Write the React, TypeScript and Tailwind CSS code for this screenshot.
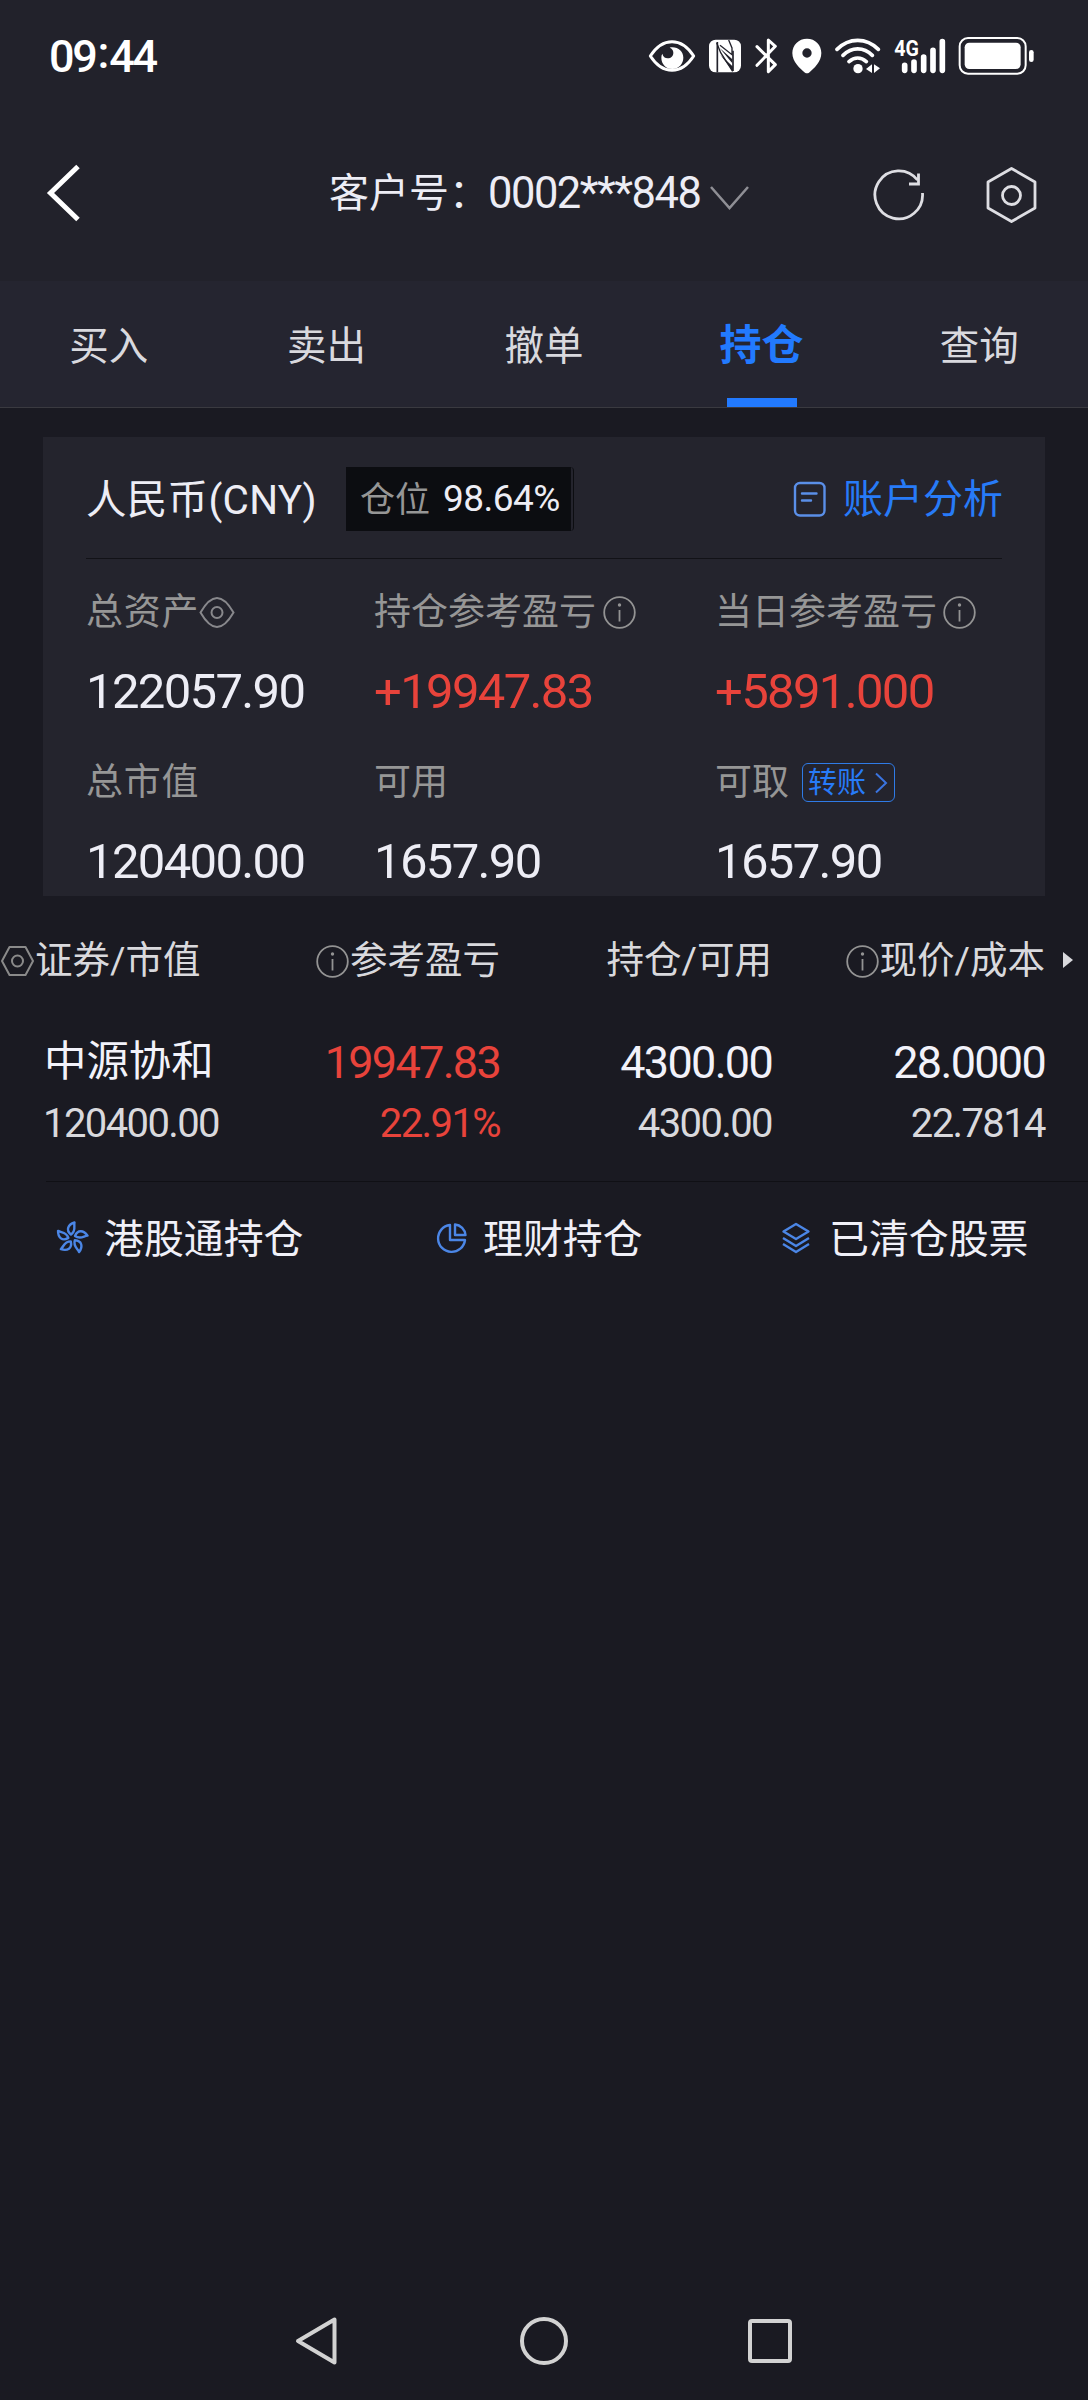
import { ReactNode } from "react";

const tabs = ["买入", "卖出", "撤单", "持仓", "查询"];

function StatusBar() {
  return (
    <div className="flex h-[112px] items-center pl-[49px] pr-[53px] text-white">
      <div className="flex items-center text-[45px] leading-none font-medium tracking-[-2.3px]">
        <span>09</span>
        <span className="px-[2px] pb-[8px]">:</span>
        <span>44</span>
      </div>
      <svg className="ml-auto h-[40px] w-[48px]" viewBox="55 48 144 120" fill="none">
        <path d="M62 108C80 80 100 65 127 65s47 15 65 43c-18 28-38 43-65 43s-47-15-65-43z" stroke="#fff" strokeWidth="9" strokeLinejoin="round" />
        <path d="M128 82c19 0 33 13 33 31s-14 34-33 34-33-15-33-34c0-5 1-9 3-12 2 9 8 14 16 14 10 0 17-7 17-17 0-7-4-13-11-15 2-1 5-1 8-1z" fill="#fff" />
      </svg>
      <svg className="ml-[13px] h-[40px] w-[32px]" viewBox="240 48 96 120" fill="none">
        <rect x="240" y="59" width="96" height="98" rx="20" fill="#fff" />
        <path d="M265 157V66M312 153V92" stroke="#22222b" strokeWidth="5" />
        <path d="M263 68l12 30 36 56M299 60l10 24v20L273 76" stroke="#22222b" strokeWidth="4" />
        <path d="M272 84l38 34v12zM274 104l38 36v14z" fill="#22222b" />
      </svg>
      <svg className="ml-[14px] h-[40px] w-[23px]" viewBox="376 48 69 120" fill="none" stroke="#fff" strokeWidth="9" strokeLinecap="round" strokeLinejoin="round">
        <path d="M382 80l55 54-21 21V60l21 19-55 57" />
      </svg>
      <svg className="ml-[14px] h-[40px] w-[30px]" viewBox="485 48 90 120">
        <path fill="#fff" fillRule="evenodd" d="M530 56c-25 0-44 19-44 43 0 27 23 46 38 59q6 4 12 0c15-13 37-32 37-59 0-24-18-43-43-43zm0 29a14 14 0 1 1 0 28 14 14 0 0 1 0-28z" />
      </svg>
      <svg className="ml-[13px] h-[40px] w-[46px]" viewBox="614 48 138 120" fill="none" stroke="#fff" strokeWidth="11" strokeLinecap="round">
        <path d="M620 88c36-36 88-36 124 0M638 106c26-26 62-26 88 0M656 125c16-14 36-14 52 0" />
        <circle cx="683" cy="146" r="14" fill="#fff" stroke="none" />
        <path d="M725 133v26l-18-12zM731 133v26l18-14z" fill="#fff" stroke="none" />
      </svg>
      <svg className="ml-[13px] h-[40px] w-[52px]" viewBox="791 48 156 120">
        <text x="792" y="107" fill="#fff" fontSize="68" fontWeight="700" textLength="74" lengthAdjust="spacingAndGlyphs">4G</text>
        <path d="M823 136v15M851 126v25M880 111v40M908 91v60M936 65v86" stroke="#fff" strokeWidth="17" strokeLinecap="round" />
      </svg>
      <svg className="ml-[12px] h-[40px] w-[77px]" viewBox="985 48 231 120" fill="none">
        <rect x="990" y="54" width="198" height="107" rx="25" stroke="#fff" strokeWidth="6" />
        <rect x="1005" y="68" width="168" height="79" rx="14" fill="#fff" />
        <rect x="1198" y="90" width="14" height="36" rx="7" fill="#fff" />
      </svg>
    </div>
  );
}

function Header() {
  return (
    <div className="flex h-[169px] items-center pb-[7px]">
      <svg className="ml-[46px] h-[60px] w-[36px] shrink-0" viewBox="46 163 36 60" fill="none">
        <path d="M78 166.500L50.500 193L78 219.500" stroke="#fff" strokeWidth="5" />
      </svg>
      <div className="ml-[247px] flex w-[380px] shrink-0 items-center pt-[2px] text-[40px] leading-none whitespace-nowrap text-[#ededf5]">
        <span className="w-[159px] shrink-0">客户号：</span>
        <span className="w-[221px] shrink-0 text-[43.500px] tracking-[-1.500px]">0002***848</span>
      </div>
      <svg className="mt-[10px] h-[28px] w-[42px] shrink-0" viewBox="709 184 42 28" fill="none">
        <path d="M711 187l18.500 21L748 187" stroke="#8f8f95" strokeWidth="2.500" />
      </svg>
      <svg className="mt-[3px] mr-[57px] ml-auto h-[56px] w-[56px] shrink-0" viewBox="871 167 56 56" fill="none" stroke="#dedee3" strokeWidth="2.800">
        <path d="M922.500 193a23.800 24 0 1 1-5-13M918.500 173.500V184H909" />
      </svg>
      <svg className="mt-[3px] mr-[50px] h-[60px] w-[54px] shrink-0" viewBox="983 165 54 60" fill="none" stroke="#dedee3" strokeWidth="2.800" strokeLinejoin="round">
        <path d="M1010.500 168.500l23.500 13.500v26l-23.500 13.500L987 208v-26z" />
        <circle cx="1010.500" cy="195.500" r="9" />
      </svg>
    </div>
  );
}

function InfoIcon() {
  return (
    <svg className="h-[33px] w-[33px] shrink-0" viewBox="0 0 33 33" fill="none" stroke="#939393" strokeWidth="1.800">
      <circle cx="16.500" cy="16.500" r="15.300" />
      <path d="M16.500 14v11.500" />
      <circle cx="16.500" cy="9" r="1.700" fill="#939393" stroke="none" />
    </svg>
  );
}

function Label({ children }: { children: ReactNode }) {
  return <div className="flex items-center text-[37px] leading-none text-[#969696]">{children}</div>;
}

function Value({ children, red }: { children: ReactNode; red?: boolean }) {
  return (
    <div className={`flex items-center pb-[2px] text-[49px] leading-none tracking-[-1.650px] ${red ? "text-[#e8433b]" : "text-[#ededf5]"}`}>
      {children}
    </div>
  );
}

function AccountCard() {
  return (
    <div className="mt-[29px] ml-[43px] h-[459px] w-[1002px] bg-[#24242d] px-[43px]">
      <div className="flex h-[122px] items-center border-b border-[#121217] pt-[2px]">
        <span className="pt-[3px] text-[40.500px] leading-none tracking-[0.300px] text-[#ededf5]">人民币(CNY)</span>
        <div className="ml-[29px] rounded-r-[4px] border-r border-[#0c0d11] pr-[2px]">
          <div className="flex h-[64px] w-[225px] items-center bg-[#0c0d11] pl-[14px] leading-none">
            <span className="pt-[3px] text-[35px]">
              <span className="text-[#969696]">仓位</span>
            </span>
            <span className="ml-[13px] text-[37px] tracking-[-0.500px] text-[#ededf5]">98.64%</span>
          </div>
        </div>
        <svg className="ml-auto h-[36px] w-[34px]" viewBox="0 0 34 36" fill="none" stroke="#5a8fe8" strokeWidth="2.400" strokeLinecap="round">
          <rect x="2" y="2" width="29.500" height="32.500" rx="5" />
          <path d="M9 12.500h14.500M9 19.500h9" />
        </svg>
        <span className="mr-[-1px] ml-[16px] pt-[3px] text-[40px] leading-none text-[#277bf8]">账户分析</span>
      </div>
      <div className="grid grid-cols-[288px_341px_1fr] grid-rows-[106px_54px_127px_32px]">
        <Label>
          <span className="tracking-[0.800px]">总资产</span>
          <svg className="h-[33px] w-[36px]" viewBox="0 0 36 33" fill="none" stroke="#88888c" strokeWidth="2">
            <path d="M1.500 16.500C7 7 12 2 18 2s11 5 16.500 14.500C29 26 24 31 18 31S7 26 1.500 16.500z" />
            <circle cx="18" cy="16.500" r="5.500" />
          </svg>
        </Label>
        <Label>
          <span className="mr-[7px]">持仓参考盈亏</span>
          <InfoIcon />
        </Label>
        <Label>
          <span className="mr-[6px]">当日参考盈亏</span>
          <InfoIcon />
        </Label>
        <Value>122057.90</Value>
        <Value red>+19947.83</Value>
        <Value red>+5891.000</Value>
        <Label>
          <span className="tracking-[0.800px]">总市值</span>
        </Label>
        <Label>可用</Label>
        <Label>
          可取
          <div className="ml-[13px] flex h-[39px] w-[93px] items-center rounded-[6px] border border-[#2f7be6] pt-px pl-[5px] text-[29px] text-[#277bf8]">
            转账
            <svg className="ml-[8px] h-[22px] w-[14px]" viewBox="0 0 14 22" fill="none" stroke="#3a74e0" strokeWidth="2">
              <path d="M2 1.500L12 11L2 20.500" />
            </svg>
          </div>
        </Label>
        <Value>120400.00</Value>
        <Value>1657.90</Value>
        <Value>1657.90</Value>
      </div>
    </div>
  );
}

function Holdings() {
  return (
    <div>
      <div className="grid h-[130px] grid-cols-[300px_200px_272px_273px_43px] items-center text-[37.500px] leading-none whitespace-nowrap text-[#d9d9dd]">
        <div className="flex items-center">
          <svg className="h-[32px] w-[35px]" viewBox="0 0 35 32" fill="none" stroke="#8a8a8a" strokeWidth="2" strokeLinejoin="round">
            <path d="M2 16L9.500 2h16L33 16l-7.500 14h-16z" />
            <circle cx="17.500" cy="16" r="5.500" />
          </svg>
          证券/市值
        </div>
        <div className="flex items-center justify-end gap-[1px]">
          <InfoIcon />
          参考盈亏
        </div>
        <div className="text-right">持仓/可用</div>
        <div className="flex items-center justify-end gap-[1px]">
          <InfoIcon />
          现价/成本
        </div>
        <svg className="mb-[3px] ml-[18px] h-[16px] w-[10px]" viewBox="0 0 10 16">
          <path d="M0 0l10 8-10 8z" fill="#d9d9dd" />
        </svg>
      </div>
      <div className="grid h-[72px] grid-cols-[300px_200px_272px_273px] items-center text-right text-[45px] leading-none tracking-[-1.700px] text-[#f2f2fa]">
        <div className="pl-[44px] text-left text-[42.400px] tracking-normal">中源协和</div>
        <div className="text-[#e8433b]">19947.83</div>
        <div>4300.00</div>
        <div>28.0000</div>
      </div>
      <div className="grid h-[52px] grid-cols-[300px_200px_272px_273px] items-center text-right text-[40px] leading-none tracking-[-1.600px] text-[#d9d9dd]">
        <div className="pl-[43px] text-left">120400.00</div>
        <div className="text-[#e8433b]">22.91%</div>
        <div>4300.00</div>
        <div>22.7814</div>
      </div>
      <div className="mt-[31px] ml-[46px] h-px bg-[#101015]" />
    </div>
  );
}

function Shortcuts() {
  return (
    <div className="flex h-[116px] items-center text-[39.900px] leading-none whitespace-nowrap text-[#f0f0f8]">
      <svg className="mb-[5px] ml-[55px] h-[34px] w-[34px]" viewBox="-17 -17 34 34" fill="none" stroke="#4b86e6" strokeWidth="2.400" strokeLinejoin="round">
        {[0, 72, 144, 216, 288].map((a) => (
          <path key={a} d="M-1 -3.500C-6.500 -8 -4 -13.500 2.500 -15.500C1.500 -12 4.500 -7.500 -1 -3.500z" transform={`rotate(${a})`} />
        ))}
      </svg>
      <span className="ml-[15px] w-[332px]">港股通持仓</span>
      <svg className="mb-[4px] h-[32px] w-[32px]" viewBox="0 0 32 32" fill="none" stroke="#4b86e6" strokeWidth="2.400" strokeLinejoin="round">
        <path d="M14 3A13.500 13.500 0 1 0 29 18H14z" />
        <path d="M19 2.500V13h10.500A11.500 11.500 0 0 0 19 2.500z" />
      </svg>
      <span className="ml-[15px] w-[298px]">理财持仓</span>
      <svg className="mb-[5px] h-[32px] w-[30px]" viewBox="0 0 30 32" fill="none" stroke="#4b86e6" strokeWidth="2.400" strokeLinejoin="round">
        <path d="M15 2l12.500 7.500L15 17L2.500 9.500zM2 16l13 8 13-8M2 22l13 8 13-8" />
      </svg>
      <span className="ml-[18px]">已清仓股票</span>
    </div>
  );
}

function NavBar() {
  return (
    <div className="mt-auto flex h-[118px] items-center justify-between pr-[295px] pl-[294px]">
      <svg className="h-[52px] w-[46px]" viewBox="0 0 46 52" fill="none" stroke="#d2d2d2" strokeWidth="4" strokeLinejoin="round">
        <path d="M40.500 4.500v43L4 26z" />
      </svg>
      <svg className="h-[50px] w-[50px]" viewBox="0 0 50 50" fill="none" stroke="#d2d2d2" strokeWidth="4">
        <circle cx="25" cy="25" r="22" />
      </svg>
      <svg className="h-[46px] w-[46px]" viewBox="0 0 46 46" fill="none" stroke="#d2d2d2" strokeWidth="4">
        <rect x="3" y="3" width="40" height="40" rx="2" />
      </svg>
    </div>
  );
}

function App() {
  return (
    <div className="flex h-[2400px] w-[1088px] flex-col overflow-hidden bg-[#1a1a22] font-['Roboto','Noto_Sans_CJK_SC',sans-serif]">
      <div className="bg-[#22222b]">
        <StatusBar />
        <Header />
      </div>
      <div className="grid h-[127px] grid-cols-5 border-b border-[#3a3a40] bg-[#252530]">
        {tabs.map((tab) => (
          <div key={tab} className="flex flex-col items-center justify-between">
            {tab === "持仓" ? (
              <>
                <span className="pt-[44px] text-[42px] leading-none font-bold text-[#227aff]">{tab}</span>
                <div className="h-[9px] w-[70px] bg-[#227aff]" />
              </>
            ) : (
              <span className="pt-[46px] text-[39.500px] leading-none text-[#d9d9de]">{tab}</span>
            )}
          </div>
        ))}
      </div>
      <AccountCard />
      <Holdings />
      <Shortcuts />
      <NavBar />
    </div>
  );
}

export default App;
